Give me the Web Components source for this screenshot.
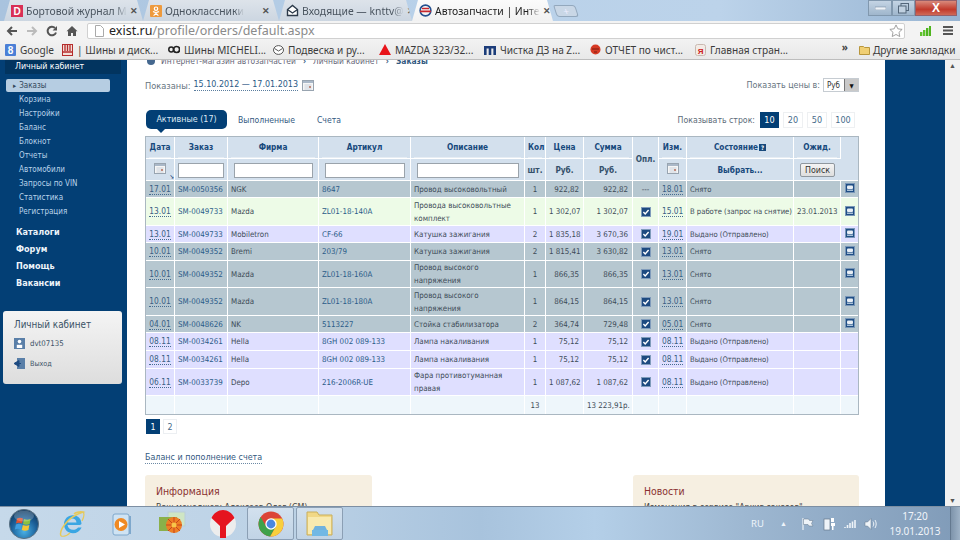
<!DOCTYPE html>
<html lang="ru">
<head>
<meta charset="utf-8">
<title>Автозапчасти</title>
<style>
  html, body { margin: 0; height: 540px; overflow: hidden; background: #fff; }
  body { display: flex; flex-direction: column; width: 960px; font-family: "Noto Sans", sans-serif; }
  x-page { flex: 1; min-height: 0; }
</style>
</head>
<body>
<x-tabstrip></x-tabstrip>
<x-toolbar></x-toolbar>
<x-bookmarks></x-bookmarks>
<x-page>
  <x-sidenav slot="nav"></x-sidenav>
  <x-period slot="main"></x-period>
  <x-order-tabs slot="main"></x-order-tabs>
  <x-orders slot="main"></x-orders>
  <x-pager slot="main"></x-pager>
  <x-info-cards slot="main"></x-info-cards>
</x-page>
<x-taskbar></x-taskbar>

<script>
const FONT = '"DejaVu Sans Condensed", "DejaVu Sans", sans-serif';
const CAL = `<svg width="12" height="11" viewBox="0 0 12 11"><rect x=".5" y=".5" width="11" height="10" fill="#f6f6f6" stroke="#98a4b0"/><rect x="1" y="1" width="10" height="2" fill="#aab8c8"/><path d="M2 5h8M2 7h8M2 9h8M4 4v6M6 4v6M8 4v6" stroke="#ccd5de" stroke-width=".6"/><rect x="7" y="6" width="2" height="2" fill="#c08a7c"/></svg>`;
const CHECK = `<svg width="10" height="10" viewBox="0 0 10 10"><rect x=".5" y=".5" width="9" height="9" fill="#1d4a80" stroke="#7f9bbb"/><path d="M2.400 5l1.800 2 3.400-4" fill="none" stroke="#fff" stroke-width="1.400"/></svg>`;
const DOC = `<svg width="10" height="10" viewBox="0 0 10 10"><rect x=".5" y=".5" width="9" height="9" fill="#1f4e85" stroke="#7a97b8"/><rect x="2" y="2.500" width="6" height="3.500" rx="1" fill="#e8eef5"/><rect x="2" y="6.500" width="6" height="1.500" fill="#a9c0d8"/></svg>`;

class XTabstrip extends HTMLElement {
  constructor() {
    super();
    const tabs = [
      ['Бортовой журнал М', 139, `<svg width="12" height="12" viewBox="0 0 12 12"><rect width="12" height="12" fill="#d92f55"/><text x="6" y="10" font-size="10" font-weight="700" text-anchor="middle" fill="#fff" font-family="Liberation Sans">D</text></svg>`, ''],
      ['Одноклассники', 136, `<svg width="12" height="12" viewBox="0 0 12 12"><rect width="12" height="12" rx="1" fill="#ee9a3d"/><circle cx="6" cy="3.700" r="1.700" fill="none" stroke="#fff" stroke-width="1.200"/><path d="M3 6.600c2 1.200 4 1.200 6 0M6 7.500v1M3.600 10.600L6 8.400l2.400 2.200" fill="none" stroke="#fff" stroke-width="1.200"/></svg>`, ''],
      ['Входящие — knttv@', 133, `<svg width="13" height="13" viewBox="0 0 13 13"><path d="M1.500 5.500L6.500 1.500l5 4v6h-10z" fill="#fff" stroke="#2c3a4a" stroke-width="1.400"/><path d="M1.500 5.500l5 3.500 5-3.500" fill="none" stroke="#2c3a4a" stroke-width="1.300"/></svg>`, ''],
      ['Автозапчасти | Инте', 141, `<svg width="13" height="13" viewBox="0 0 13 13"><circle cx="6.500" cy="6.500" r="5.400" fill="none" stroke="#25508f" stroke-width="1.600"/><path d="M1 7.400h11M3 4.500h7" stroke="#c8262c" stroke-width="1.700"/></svg>`, 'active']
    ];
    this.attachShadow({ mode: 'open' }).innerHTML = `
      <style>
        :host { display: flex; height: 21px; padding-left: 4px; background: linear-gradient(90deg, #a9c3de 0%, #b9d1e9 45%, #bcd3ea 75%, #97b4d2 100%); font: 10.400px "Noto Sans", sans-serif; color: #49545f; box-sizing: border-box; }
        .tab { box-sizing: border-box; flex: none; height: 21px; display: flex; align-items: center; gap: 3px; padding: 0 9px 0 7px; clip-path: polygon(0 100%, 6px 0, calc(100% - 6px) 0, 100% 100%); background: linear-gradient(#dde3ea, #ccd6e1); }
        .tab svg { flex: none; }
        .tab.active { background: linear-gradient(#fbfbfb, #f1f1f1); color: #222; }
        .title { white-space: nowrap; -webkit-mask-image: linear-gradient(90deg, #000 88%, transparent); mask-image: linear-gradient(90deg, #000 88%, transparent); }
        .x { margin-left: auto; font-size: 9px; color: #555; font-weight: 700; }
        .new { width: 20px; height: 10px; margin: 5px 0 0 2px; background: #c9d7e6; border: 1px solid #93a8bd; border-radius: 2px 3px 3px 3px; transform: skewX(18deg); color: #eef; font-size: 10px; line-height: 10px; text-align: center; }
        .spacer { flex: 1; }
        .win { display: flex; height: 16px; margin-right: 3px; }
        .win div { height: 16px; display: flex; align-items: center; justify-content: center; box-sizing: border-box; }
        .min { width: 24px; }
        .max { width: 23px; }
        .min, .max { background: linear-gradient(#c4d4e4, #9fb6cc); border: 1px solid #8198ae; }
        .close { width: 42px; background: linear-gradient(#d98a7c, #c23a2c 60%, #cf6a58); border: 1px solid #95606a; color: #fff; font: 700 12px "Liberation Sans", sans-serif; }
      </style>
      ${tabs.map(t => `<div class="tab ${t[3]}" style="width:${t[1]}px">${t[2]}<span class="title">${t[0]}</span><span class="x">✕</span></div>`).join('')}
      <div class="new">+</div>
      <div class="spacer"></div>
      <div class="win">
        <div class="min"><svg width="11" height="4"><rect width="11" height="3" y="1" fill="#eef3f8" stroke="#6d8198" stroke-width=".5"/></svg></div>
        <div class="max"><svg width="11" height="11"><rect x="3" y=".5" width="7.500" height="7" fill="none" stroke="#53667a"/><rect x=".5" y="3" width="7.500" height="7" fill="#c0d0e0" stroke="#53667a"/></svg></div>
        <div class="close">X</div>
      </div>`;
  }
}

class XToolbar extends HTMLElement {
  constructor() {
    super();
    this.attachShadow({ mode: 'open' }).innerHTML = `
      <style>
        :host { display: flex; align-items: center; height: 19px; box-sizing: border-box; background: #f3f3f3; padding: 0 7px 0 6px; }
        .nav { display: flex; align-items: center; gap: 8px; width: 81px; }
        .url { flex: 1; height: 16px; box-sizing: border-box; background: #fff; border: 1px solid #d0d0d0; border-radius: 2px; display: flex; align-items: center; padding-left: 7px; gap: 5px; font: 12.500px "Noto Sans", sans-serif; color: #8a8a8a; }
        .url b { font-weight: 400; color: #222; }
        .url span { flex: 1; }
        .right { display: flex; align-items: center; gap: 12px; margin-left: 15px; }
      </style>
      <div class="nav">
        <svg width="12" height="12" viewBox="0 0 12 12"><path d="M11 6H3M6 2L2 6l4 4" fill="none" stroke="#555" stroke-width="2"/></svg>
        <svg width="12" height="12" viewBox="0 0 12 12"><path d="M1 6h8M6 2l4 4-4 4" fill="none" stroke="#bbb" stroke-width="2"/></svg>
        <svg width="12" height="12" viewBox="0 0 12 12"><path d="M10 7.500A4.300 4.300 0 1 1 9 3" fill="none" stroke="#555" stroke-width="2"/><path d="M11 1v4.400H6.600z" fill="#555"/></svg>
        <svg width="12" height="12" viewBox="0 0 12 12"><path d="M6 1L.5 6.200H2V11h3V8h2v3h3V6.200h1.500z" fill="#555"/></svg>
      </div>
      <div class="url">
        <svg width="9" height="12" viewBox="0 0 9 12"><path d="M.5.500h5l3 3v8h-8z" fill="#fff" stroke="#aaa"/></svg>
        <span><b>exist.ru</b>/profile/orders/default.aspx</span>
        <svg width="14" height="13" viewBox="0 0 15 14" style="margin-right:1px"><path d="M7.500 1l2 4.200 4.600.6-3.400 3.200.9 4.500-4.100-2.200-4.100 2.200.9-4.500L.9 5.800l4.600-.6z" fill="#fff" stroke="#999"/></svg>
      </div>
      <div class="right">
        <svg width="11" height="10" viewBox="0 0 11 10"><rect y="6" width="2.400" height="4" fill="#5fc22e"/><rect x="3" y="4" width="2.400" height="6" fill="#5fc22e"/><rect x="6" y="2" width="2.400" height="8" fill="#4fb51f"/><rect x="9" width="2" height="10" fill="#4fb51f"/></svg>
        <svg width="10" height="9" viewBox="0 0 10 9"><path d="M0 1h10M0 4.500h10M0 8h10" stroke="#555" stroke-width="1.800"/></svg>
      </div>`;
  }
}

class XBookmarks extends HTMLElement {
  constructor() {
    super();
    const items = [
      ['Google', 57, `<svg width="11" height="12" viewBox="0 0 11 12"><rect width="11" height="12" rx="1" fill="#4b7fd6"/><text x="5.500" y="10" font-size="10" font-weight="700" text-anchor="middle" fill="#fff" font-family="Liberation Sans">8</text></svg>`],
      ['| Шины и диск...', 106, `<svg width="11" height="12" viewBox="0 0 11 12"><rect x=".5" y=".5" width="10" height="11" fill="#f4dfd8" stroke="#b52c2c"/><path d="M3 1v6M5.500 1v6M8 1v6M1 8h9" stroke="#b52c2c" stroke-width="1.300"/></svg>`],
      ['Шины MICHELI...', 105, `<svg width="12" height="9" viewBox="0 0 12 9"><circle cx="3.200" cy="4.500" r="2.400" fill="none" stroke="#222" stroke-width="1.500"/><circle cx="8.600" cy="4.500" r="3" fill="none" stroke="#222" stroke-width="1.700"/></svg>`],
      ['Подвеска и ру...', 106, `<svg width="11" height="10" viewBox="0 0 11 10"><ellipse cx="5.500" cy="5" rx="5" ry="4.400" fill="#fff" stroke="#555"/><path d="M1.500 3.500L5.500 6l4-2.500" fill="none" stroke="#555"/></svg>`],
      ['MAZDA 323/32...', 105, `<svg width="12" height="11" viewBox="0 0 12 11"><path d="M6 0l6 11H0z" fill="#e8141a"/></svg>`],
      ['Чистка ДЗ на Z...', 106, `<svg width="12" height="10" viewBox="0 0 12 10"><path d="M0 1h12v9H9.400V3.400H7.300V10H4.700V3.400H2.600V10H0z" fill="#1c3d7a"/></svg>`],
      ['ОТЧЕТ по чист...', 105, `<svg width="11" height="11" viewBox="0 0 11 11"><circle cx="5.500" cy="5.500" r="5" fill="#d63a24"/><path d="M2 5h7M4 8h3" stroke="#7c1c10" stroke-width="1.200"/></svg>`],
      ['Главная стран...', 105, `<svg width="11" height="12" viewBox="0 0 11 12"><rect x=".5" y=".5" width="10" height="11" rx="2" fill="#f3ebe6" stroke="#c8b9b0"/><text x="5.500" y="9.500" font-size="8" font-weight="700" text-anchor="middle" fill="#cc2222" font-family="Liberation Sans">Я</text></svg>`]
    ];
    this.attachShadow({ mode: 'open' }).innerHTML = `
      <style>
        :host { display: flex; align-items: center; height: 20px; box-sizing: border-box; padding-left: 5px; background: linear-gradient(#f2f2f2, #e8e8e8); border-bottom: 1px solid #bdbdbd; font: 10.100px "Noto Sans", sans-serif; color: #3b3b3b; white-space: nowrap; }
        .b { display: flex; flex: none; align-items: center; gap: 4px; box-sizing: border-box; }
        .more { width: 59px; flex: none; box-sizing: border-box; font-size: 10px; font-weight: 700; color: #444; text-align: right; padding-right: 11px; margin-top: -5px; }
        .other { display: flex; flex: none; align-items: center; gap: 3px; }
      </style>
      ${items.map(i => `<div class="b" style="width:${i[1]}px">${i[2]}<span>${i[0]}</span></div>`).join('')}
      <div class="more">»</div>
      <div class="other"><svg width="11" height="10" viewBox="0 0 11 10"><path d="M.5 1.500h4l1 1h5v7h-10z" fill="#f0cf74" stroke="#b8963c"/></svg><span>Другие закладки</span></div>`;
  }
}

class XPage extends HTMLElement {
  constructor() {
    super();
    this.attachShadow({ mode: 'open' }).innerHTML = `
      <style>
        :host { display: grid; grid-template-columns: 127px 758px 60px 15px; overflow: hidden; background: #fff; }
        .nav { background: #033f75; overflow: hidden; }
        .main { padding: 0 26px 0 18px; overflow: hidden; min-width: 0; }
        .crumbs { display: flex; align-items: center; gap: 7px; height: 10px; margin-top: -4px; padding-left: 1px; font: 8.400px ${FONT}; color: #667; }
        .crumbs svg { margin-right: -2px; }
        .crumbs b { color: #33597f; }
        .blue { background: #033f75; }
        .scroll { background: #f1f1f1; display: flex; flex-direction: column; justify-content: space-between; align-items: center; font-size: 7px; color: #555; padding: 1px 0; }
      </style>
      <div class="nav"><slot name="nav"></slot></div>
      <div class="main">
        <div class="crumbs"><svg width="10" height="9"><circle cx="5" cy="4" r="4" fill="#45688f"/></svg><span>Интернет-магазин автозапчастей</span><b>›</b><span>Личный кабинет</span><b>›</b><b>Заказы</b></div>
        <slot name="main"></slot>
      </div>
      <div class="blue"></div>
      <div class="scroll"><span>▲</span><span>▼</span></div>`;
  }
}

class XSidenav extends HTMLElement {
  constructor() {
    super();
    const sub = ['Заказы', 'Корзина', 'Настройки', 'Баланс', 'Блокнот', 'Отчеты', 'Автомобили', 'Запросы по VIN', 'Статистика', 'Регистрация'];
    const top = ['Каталоги', 'Форум', 'Помощь', 'Вакансии'];
    this.attachShadow({ mode: 'open' }).innerHTML = `
      <style>
        :host { display: block; font: 8.200px ${FONT}; color: #cfe0f0; }
        .head { margin: 0 6px 0 5px; height: 14px; box-sizing: border-box; background: #02345f; padding: 0 0 3px 10px; display: flex; align-items: center; color: #fff; font-size: 8.800px; }
        ul { list-style: none; margin: 5px 0 0; padding: 0; }
        li { height: 14px; line-height: 14px; padding-left: 19px; color: #b9d3ea; font-size: 8px; }
        li.on { height: 13px; line-height: 13px; margin: 0 17px 1px 6px; padding-left: 7px; background: #b6cde2; border-radius: 2px; color: #33475a; }
        li.on::before { content: "▸"; font-size: 7px; margin-right: 3px; }
        .top { margin-top: 3px; padding-left: 16px; padding-top: 2px; }
        .top div { height: 17px; line-height: 17px; color: #eef4fa; font-size: 9px; font-weight: 700; }
        x-user-card { margin-top: 19px; }
      </style>
      <div class="head">Личный кабинет</div>
      <ul>${sub.map((s, i) => `<li class="${i === 0 ? 'on' : ''}">${s}</li>`).join('')}</ul>
      <div class="top">${top.map(s => `<div>${s}</div>`).join('')}</div>
      <x-user-card></x-user-card>`;
  }
}

class XUserCard extends HTMLElement {
  constructor() {
    super();
    this.attachShadow({ mode: 'open' }).innerHTML = `
      <style>
        :host { display: block; width: 119px; height: 73px; margin-left: 3px; box-sizing: border-box; padding: 8px 0 0 11px; border-radius: 3px; background: linear-gradient(#f4f4f4, #dddddd); font: 7.800px ${FONT}; color: #3c5468; }
        h4 { margin: 0 0 6px; font-size: 9.800px; font-weight: 400; color: #3b5366; }
        .r { display: flex; align-items: center; gap: 5px; height: 14px; margin-bottom: 6px; }
        .small { font-size: 7.200px; }
      </style>
      <h4>Личный кабинет</h4>
      <div class="r"><svg width="11" height="11" viewBox="0 0 11 11"><rect width="11" height="11" fill="#5a7fa8"/><circle cx="5.500" cy="3.600" r="1.800" fill="#fff"/><path d="M2.800 10V6.800h5.400V10" fill="#fff"/></svg>dvt07135</div>
      <div class="r small"><svg width="11" height="11" viewBox="0 0 11 11"><rect x="3" width="8" height="11" fill="#5a7fa8"/><path d="M7 5.500H3.500M5 2.600L0 5.500l5 2.900z" fill="#1d4a80" stroke="#1d4a80"/></svg>Выход</div>`;
  }
}

class XPeriod extends HTMLElement {
  constructor() {
    super();
    this.attachShadow({ mode: 'open' }).innerHTML = `
      <style>
        :host { display: flex; align-items: center; height: 14px; margin-top: 12px; font: 9.200px ${FONT}; color: #667480; }
        .d { margin-left: 3px; font-size: 8.900px; color: #2b5a86; border-bottom: 1px dotted #5a7d9e; line-height: 11px; margin-right: 4px; }
        .sp { flex: 1; }
        .lbl { font-size: 8.900px; }
        .sel { display: flex; align-items: center; margin-left: 3px; height: 14px; width: 36px; justify-content: space-between; border: 1px solid #c6ccd2; box-sizing: border-box; color: #333; font-size: 8px; }
        .sel span { padding: 0 3px; }
        .sel i { width: 14px; height: 12px; background: #c9c9c9; border-left: 1px solid #777; box-sizing: border-box; display: flex; align-items: center; justify-content: center; font-style: normal; font-size: 6px; color: #111; }
      </style>
      <span>Показаны:</span><span class="d">15.10.2012 — 17.01.2013</span>${CAL}
      <span class="sp"></span>
      <span class="lbl">Показать цены в:</span><div class="sel"><span>Руб</span><i>▼</i></div>`;
  }
}

class XOrderTabs extends HTMLElement {
  constructor() {
    super();
    this.attachShadow({ mode: 'open' }).innerHTML = `
      <style>
        :host { display: flex; align-items: center; height: 19px; margin-top: 18px; font: 8.600px ${FONT}; color: #33597f; }
        .on { position: relative; width: 81px; height: 19px; line-height: 19px; text-align: center; box-sizing: border-box; background: #033f75; color: #dbe8f4; border-radius: 5px; margin-left: 1px; font-size: 8.900px; }
        .on::after { content: ""; position: absolute; left: 11px; bottom: -4px; border: 4px solid transparent; border-bottom: 0; border-top-color: #033f75; }
        .t1 { margin-left: 11px; }
        .t2 { margin-left: 22px; }
        .sp { flex: 1; }
        .lbl { color: #5c6b78; margin-right: 1px; font-size: 8.700px; }
        .p { height: 16px; line-height: 15px; text-align: center; margin-left: 4px; border: 1px solid #eef0f2; color: #476a8a; box-sizing: border-box; font-size: 9px; }
        .p.cur { background: #033f75; color: #fff; border-color: #033f75; }
      </style>
      <div class="on">Активные (17)</div><span class="t1">Выполненные</span><span class="t2">Счета</span>
      <span class="sp"></span>
      <span class="lbl">Показывать строк:</span><span class="p cur" style="width:19px">10</span><span class="p" style="width:20px">20</span><span class="p" style="width:20px">50</span><span class="p" style="width:24px;margin-right:4px">100</span>`;
  }
}

class XOrders extends HTMLElement {
  constructor() {
    super();
    const G = 'g', L = 'l', V = 'v';
    const rows = [
      [G, 17, '17.01', 'SM-0050356', 'NGK', '8647', 'Провод высоковольтный', '1', '922,82', '922,82', '---', '18.01', 'Снято', '', 1],
      [L, 28, '13.01', 'SM-0049733', 'Mazda', 'ZL01-18-140A', 'Провода высоковольтные<br>комплект', '1', '1 302,07', '1 302,07', 1, '15.01', 'В работе (запрос на снятие)', '23.01.2013', 1],
      [V, 17, '13.01', 'SM-0049733', 'Mobiletron', 'CF-66', 'Катушка зажигания', '2', '1 835,18', '3 670,36', 1, '19.01', 'Выдано (Отправлено)', '', 1],
      [G, 18, '10.01', 'SM-0049352', 'Bremi', '203/79', 'Катушка зажигания', '2', '1 815,41', '3 630,82', 1, '13.01', 'Снято', '', 1],
      [G, 27, '10.01', 'SM-0049352', 'Mazda', 'ZL01-18-160A', 'Провод высокого<br>напряжения', '1', '866,35', '866,35', 1, '13.01', 'Снято', '', 1],
      [G, 28, '10.01', 'SM-0049352', 'Mazda', 'ZL01-18-180A', 'Провод высокого<br>напряжения', '1', '864,15', '864,15', 1, '13.01', 'Снято', '', 1],
      [G, 17, '04.01', 'SM-0048626', 'NK', '5113227', 'Стойка стабилизатора', '2', '364,74', '729,48', 1, '05.01', 'Снято', '', 1],
      [V, 18, '08.11', 'SM-0034261', 'Hella', '8GH 002 089-133', 'Лампа накаливания', '1', '75,12', '75,12', 1, '08.11', 'Выдано (Отправлено)', '', 0],
      [V, 18, '08.11', 'SM-0034261', 'Hella', '8GH 002 089-133', 'Лампа накаливания', '1', '75,12', '75,12', 1, '08.11', 'Выдано (Отправлено)', '', 0],
      [V, 27, '06.11', 'SM-0033739', 'Depo', '216-2006R-UE', 'Фара противотуманная<br>правая', '1', '1 087,62', '1 087,62', 1, '08.11', 'Выдано (Отправлено)', '', 0]
    ];
    const widths = [29, 53, 91, 92, 114, 21, 38, 49, 26, 28, 107, 47, 17];
    this.attachShadow({ mode: 'open' }).innerHTML = `
      <style>
        :host { display: block; margin-top: 7px; width: 714px; font: 7.900px ${FONT}; color: #3d4b57; }
        table { table-layout: fixed; width: 714px; border-collapse: separate; border-spacing: 0; border: 1px solid #aab7c1; }
        th, td { border-right: 1px solid #fff; border-bottom: 1px solid #fff; padding: 0; overflow: hidden; white-space: nowrap; }
        th:last-child, td:last-child { border-right: 0; }
        th { background: #d3e0ed; color: #17497c; font-size: 8.200px; text-align: center; height: 21px; }
        th .t { display: block; margin: 0 3px; line-height: 20px; border-bottom: 1px solid #e6edf4; }
        th.nb { color: #34506b; }
        th input { display: block; box-sizing: border-box; height: 15px; margin: 1px 5px 0 6px; width: calc(100% - 11px); border: 1px solid #9aa3ab; background: #fff; }
        th input.n { margin: 1px 3px 0; width: calc(100% - 6px); }
        .q { display: inline-block; width: 7px; height: 7px; line-height: 7px; margin-left: 1px; background: #17497c; color: #fff; font-size: 6px; vertical-align: 0; }
        .bbtn { display: inline-block; height: 14px; line-height: 12px; padding: 0 4px; box-sizing: border-box; border: 1px solid #8f979e; border-radius: 2px; background: linear-gradient(#f4f4f4, #dedede); color: #333; font-weight: 400; font-size: 8.800px; }
        td { padding: 0 3px; line-height: 13px; }
        tr.g td { background: #b6c7d0; }
        tr.l td { background: #edfbe7; }
        tr.v td { background: #dfdfff; }
        tr.t td { background: #eef6fb; height: 18px; border-bottom: 0; }
        .c { text-align: center; }
        .r { text-align: right; padding-right: 4px; }
        .st { font-size: 7.600px; }
        .dt { color: #3a5f84; border-bottom: 1px dotted #466d92; line-height: 10px; display: inline-block; font-size: 8.300px; }
        .lnk { color: #2a5b88; }
        .ic svg { display: block; margin: 0 auto; }
        .act svg { margin-top: -2px; }
        .corner { position: relative; }
        .corner::after { content: "↘"; position: absolute; right: 0; bottom: 0; font-size: 6px; line-height: 6px; color: #1d4a80; font-weight: 700; }
      </style>
      <table>
        <colgroup>${widths.map(w => `<col style="width:${w}px">`).join('')}</colgroup>
        <tr>
          <th><span class="t">Дата</span></th><th><span class="t">Заказ</span></th><th><span class="t">Фирма</span></th><th><span class="t">Артикул</span></th><th><span class="t">Описание</span></th>
          <th><span class="t">Кол</span></th><th><span class="t">Цена</span></th><th><span class="t">Сумма</span></th>
          <th rowspan="2" class="nb">Опл.</th><th><span class="t">Изм.</span></th><th><span class="t">Состояние<span class="q">?</span></span></th><th><span class="t">Ожид.</span></th><th rowspan="2"></th>
        </tr>
        <tr>
          <th class="corner">${CAL}</th><th><input class="n"></th><th><input></th><th><input></th><th><input></th>
          <th class="nb">шт.</th><th class="nb">Руб.</th><th class="nb">Руб.</th>
          <th>${CAL}</th><th>Выбрать...</th><th><span class="bbtn">Поиск</span></th>
        </tr>
        ${rows.map(r => `<tr class="${r[0]}" style="height:${r[1]}px">
          <td class="c"><span class="dt">${r[2]}</span></td><td class="lnk">${r[3]}</td><td>${r[4]}</td><td class="lnk">${r[5]}</td><td>${r[6]}</td>
          <td class="c">${r[7]}</td><td class="r">${r[8]}</td><td class="r">${r[9]}</td>
          <td class="c ic">${r[10] === 1 ? CHECK : r[10]}</td><td class="c"><span class="dt">${r[11]}</span></td><td class="st">${r[12]}</td><td class="c">${r[13]}</td>
          <td class="ic act">${r[14] ? DOC : ''}</td>
        </tr>`).join('')}
        <tr class="t"><td></td><td></td><td></td><td></td><td></td><td class="c">13</td><td></td><td class="r">13 223,91р.</td><td></td><td></td><td></td><td></td><td></td></tr>
      </table>`;
  }
}

class XPager extends HTMLElement {
  constructor() {
    super();
    this.attachShadow({ mode: 'open' }).innerHTML = `
      <style>
        :host { display: block; margin-top: 4px; font: 8.800px ${FONT}; color: #476a8a; }
        .ps { display: flex; gap: 3px; margin-left: 1px; }
        .ps span { width: 14px; height: 15px; line-height: 15px; text-align: center; border: 1px solid #eceff2; box-sizing: border-box; }
        .ps .cur { background: #033f75; color: #fff; border-color: #033f75; }
        .bal { display: inline-block; margin-top: 17px; color: #33597f; font-size: 8.900px; line-height: 12px; border-bottom: 1px dotted #6d8aa5; }
      </style>
      <div class="ps"><span class="cur">1</span><span>2</span></div>
      <span class="bal">Баланс и пополнение счета</span>`;
  }
}

class XInfoCards extends HTMLElement {
  constructor() {
    super();
    this.attachShadow({ mode: 'open' }).innerHTML = `
      <style>
        :host { display: flex; justify-content: space-between; margin-top: 11px; width: 714px; font: 8.800px ${FONT}; color: #444; }
        .card { width: 227px; height: 40px; box-sizing: border-box; padding: 10px 11px 0; border-radius: 3px; background: #f6efe1; }
        .card + .card { width: 226px; }
        h3 { margin: 0 0 5px; font-size: 10.400px; font-weight: 400; color: #8a3030; }
      </style>
      <div class="card"><h3>Информация</h3>Ваш менеджер: Алексеев Олег (CM)</div>
      <div class="card"><h3>Новости</h3>Изменения в сервисе "Архив заказов"</div>`;
  }
}

class XTaskbar extends HTMLElement {
  constructor() {
    super();
    this.attachShadow({ mode: 'open' }).innerHTML = `
      <style>
        :host { display: flex; align-items: center; height: 34px; flex: none; box-sizing: border-box; border-top: 1px solid #7d8fa3; background: linear-gradient(90deg, #c6d9ea 0%, #bcd2e6 30%, #a8c3dd 50%, #b4cfe8 62%, #9db7d1 78%, #809bb8 100%); font: 9px "Noto Sans", sans-serif; color: #fff; overflow: hidden; }
        .apps { display: flex; align-items: center; height: 33px; }
        .slot { width: 49px; height: 33px; display: flex; align-items: center; justify-content: center; flex: none; box-sizing: border-box; }
        .slot.open { width: 47px; margin-right: 2px; border: 1px solid #8b9fb4; border-radius: 2px; background: linear-gradient(#d8e4f0cc, #c2d4e6cc); }
        .sp { flex: 1; }
        .tray { display: flex; align-items: center; height: 33px; color: #eef4fa; }
        .tray > * { flex: none; }
        .lang { width: 25px; font-size: 9.500px; text-align: center; margin-right: 3px; }
        .clock { width: 66px; text-align: center; font-size: 10px; line-height: 15px; color: #f1f5fa; margin: 0 2px 0 1px; }
        .desk { width: 10px; height: 33px; background: linear-gradient(90deg, #7e94ab, #9fb3c7); border-left: 1px solid #64798f; box-sizing: border-box; }
        .ti { width: 21px; display: flex; justify-content: center; }
      </style>
      <div class="apps">
        <div class="slot" style="width:47px"><svg width="30" height="30" viewBox="0 0 30 30"><defs><radialGradient id="o" cx=".5" cy=".75" r=".8"><stop offset="0" stop-color="#49b1e6"/><stop offset=".55" stop-color="#1b5f98"/><stop offset="1" stop-color="#0e2f4f"/></radialGradient></defs><circle cx="15" cy="15" r="14.600" fill="url(#o)" stroke="#5b7385"/><path d="M8 9.600c2 -1 4 -1 6 0l-1 5c-2-1-4-1-6 0z" fill="#e5512e"/><path d="M15 10c2 1 4 1 6.600 0l-1 5c-2 1-4.500 1-6.600 0z" fill="#8bc13f"/><path d="M6.900 15.500c2-1 4-1 6 0l-1 5c-2-1-4-1-6 0z" fill="#3f9ee0"/><path d="M13.800 16c2 1 4.500 1 6.600 0l-1 5c-2 1-4.500 1-6.600 0z" fill="#f4c533"/><ellipse cx="15" cy="7" rx="10" ry="5.500" fill="#fff" opacity=".22"/></svg></div>
        <div class="slot"><svg width="28" height="28" viewBox="0 0 28 28"><path d="M22 15H9.500c.3 3 2.700 4.800 5.600 4.800 2 0 3.700-.8 5-2.300h3.500c-1.800 3.800-4.800 5.800-8.600 5.800-5.300 0-9-3.900-9-9s3.800-9 9-9c5.100 0 8.500 3.700 8.500 8.800zM9.700 12.400h8.800c-.3-2.600-2-4-4.300-4-2.400 0-4 1.500-4.500 4z" fill="#3aa6e3"/><path d="M3 26C1 22 7 8 25 2c-4-1-8 1-9 2" fill="none" stroke="#e6c95a" stroke-width="1.500"/><path d="M25 2c2 2 1 5-1 9M3 26c3 1 7-1 9-3" fill="none" stroke="#e6c95a" stroke-width="1.200"/></svg></div>
        <div class="slot"><svg width="22" height="24" viewBox="0 0 22 24"><rect x="3" y="2" width="16" height="21" rx="2" fill="#cfe3f3" stroke="#7fa8cc"/><rect x="19" y="4" width="2" height="18" fill="#7fa8cc"/><circle cx="11" cy="12.500" r="6.500" fill="#f08a24"/><path d="M9 9l6 3.500-6 3.500z" fill="#fff"/></svg></div>
        <div class="slot" style="width:53px"><svg width="28" height="26" viewBox="0 0 28 26"><rect x="10" y="1" width="17" height="14" fill="#cfe6c4" stroke="#b9cdd8"/><rect x="1" y="6" width="18" height="14" fill="#8ab04a"/><circle cx="16" cy="14" r="8" fill="#ee7f24"/><path d="M16 6v16M8 14h16M10 8l12 12M22 8L10 20" stroke="#c8451c"/><circle cx="16" cy="14" r="2.500" fill="#f7c64a"/></svg></div>
        <div class="slot" style="width:49px"><svg width="28" height="30" viewBox="0 0 28 30"><circle cx="14" cy="15" r="13" fill="#ededed"/><path d="M2.500 9c2-5 7-8 11.500-8s9.500 3 11.500 8L17 17v12h-6V17z" fill="#e5141f"/></svg></div>
        <div class="slot open"><svg width="26" height="26" viewBox="0 0 26 26"><circle cx="13" cy="13" r="12.500" fill="#dc4437"/><path d="M2.640 6.050A12.500 12.500 0 0 0 12.160 25.450L17.760 15.750H8.240z" fill="#3fa24b"/><path d="M12.160 25.450A12.500 12.500 0 0 0 24.200 7.500H13L17.760 15.750z" fill="#f8cf3d"/><circle cx="13" cy="13" r="5.700" fill="#fff"/><circle cx="13" cy="13" r="4.400" fill="#4a88e0"/></svg></div>
        <div class="slot open"><svg width="30" height="28" viewBox="0 0 30 28"><path d="M2 2h10l2 3h13v20H2z" fill="#f1d886" stroke="#c9ae5c"/><rect x="3" y="7" width="23" height="17" fill="#f8eab0"/><rect x="7" y="20" width="16" height="6" fill="#72b8e4"/><path d="M8 20l2-4h10l2 4z" fill="#6fb2de"/></svg></div>
      </div>
      <div class="sp"></div>
      <div class="tray">
        <span class="lang">RU</span>
        <span class="ti" style="font-size:7px;margin-right:3px">▲</span>
        <span class="ti"><svg width="13" height="14" viewBox="0 0 13 14"><path d="M2 1v12" stroke="#fff"/><path d="M2.500 2h5l1 1.500H12l-1.500 3L12 9H8L7 7.500H2.500z" fill="#eef3f8" stroke="#66788c" stroke-width=".5"/></svg></span>
        <span class="ti"><svg width="12" height="14" viewBox="0 0 12 14"><rect x="1" y="2" width="6" height="11" fill="#eef3f8" stroke="#66788c" stroke-width=".7"/><rect x="8" y="1" width="3" height="4" fill="#fff"/><path d="M8 6h4v3h-1.500v4H9V9H8z" fill="#fff"/></svg></span>
        <span class="ti"><svg width="12" height="10" viewBox="0 0 12 10"><path d="M1 9v-1M3.500 9V6M6 9V4M8.500 9V2.500M11 9V1" stroke="#eef3f8" stroke-width="1.600"/></svg></span>
        <span class="ti"><svg width="14" height="14" viewBox="0 0 14 14"><path d="M1 5h2.500L7 1.500v11L3.500 9H1z" fill="#eef3f8" stroke="#66788c" stroke-width=".5"/><path d="M9 4.500c1 1.500 1 3.500 0 5M11 3c1.600 2.400 1.600 5.600 0 8" fill="none" stroke="#eef3f8"/></svg></span>
        <div class="clock">17:20<br>19.01.2013</div>
        <div class="desk"></div>
      </div>`;
  }
}

customElements.define('x-tabstrip', XTabstrip);
customElements.define('x-toolbar', XToolbar);
customElements.define('x-bookmarks', XBookmarks);
customElements.define('x-page', XPage);
customElements.define('x-user-card', XUserCard);
customElements.define('x-sidenav', XSidenav);
customElements.define('x-period', XPeriod);
customElements.define('x-order-tabs', XOrderTabs);
customElements.define('x-orders', XOrders);
customElements.define('x-pager', XPager);
customElements.define('x-info-cards', XInfoCards);
customElements.define('x-taskbar', XTaskbar);
</script>
</body>
</html>
